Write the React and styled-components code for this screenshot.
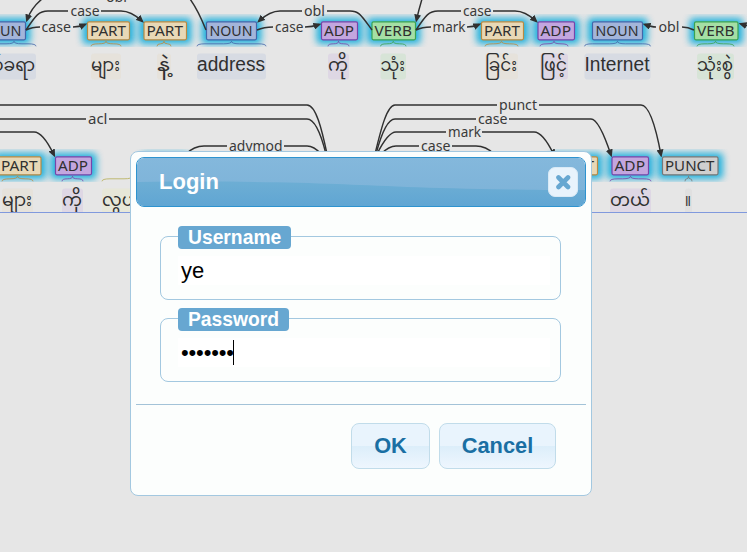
import React from "react";
import styled, { createGlobalStyle } from "styled-components";

const GlobalStyle = createGlobalStyle`
  * { box-sizing: border-box; }
  body { margin: 0; background: #e6e6e6; overflow: hidden; }
`;

const Page = styled.main`
  position: relative;
  width: 747px;
  height: 552px;
  overflow: hidden;
  background: #e6e6e6;
  font-family: "Liberation Sans", Arial, sans-serif;
`;

const TreePanel = styled.section`
  height: 213px;
  overflow: hidden;
  border-bottom: 1px solid #8099dd;
`;

const Tree = styled.svg`
  display: block;
`;

const TagText = styled.text`
  font: 15px "Noto Sans", "Open Sans", sans-serif;
  fill: #303030;
`;

const ArcText = styled.text`
  font: 14.2px "Noto Sans", "Open Sans", sans-serif;
  fill: #3a3a3a;
`;

const WordText = styled.text`
  font: ${(p) => (p.$latin ? "20px" : "18px")} "Liberation Sans", "Noto Sans Myanmar", Padauk, sans-serif;
  fill: #303030;
`;

const Dialog = styled.section`
  position: absolute;
  left: 130px;
  top: 151px;
  width: 462px;
  height: 345px;
  padding: 5px;
  display: flex;
  flex-direction: column;
  border: 1px solid #a3c8e0;
  border-radius: 8px;
  background: #fcfefd;
`;

const TitleBar = styled.header`
  position: relative;
  flex: none;
  height: 50px;
  padding: 0 7px 0 22px;
  display: flex;
  align-items: center;
  justify-content: space-between;
  border: 1px solid #2e93cf;
  border-radius: 8px;
  overflow: hidden;
  color: #fff;
`;

const Wave = styled.svg`
  position: absolute;
  inset: 0;
`;

const Title = styled.h1`
  position: relative;
  margin: 0;
  font-size: 22px;
  line-height: 26px;
`;

const CloseButton = styled.button`
  position: relative;
  width: 30px;
  height: 30px;
  padding: 0;
  display: grid;
  place-items: center;
  border: 1px solid #d9eaf6;
  border-radius: 7px;
  background: #e8f3fc;
`;

const Form = styled.div`
  flex: 1;
  display: flex;
  flex-direction: column;
  padding-top: 19px;
`;

const Field = styled.div`
  height: 74px;
  margin: 0 25px 8px 24px;
  display: flex;
  flex-direction: column;
  align-items: flex-start;
`;

const Frame = styled.div`
  align-self: stretch;
  height: 64px;
  margin-top: -13px;
  padding: 19px 10px 0 17px;
  border: 1px solid #a3c8e0;
  border-radius: 8px;
`;

const Legend = styled.label`
  position: relative;
  z-index: 1;
  height: 23px;
  margin-left: 18px;
  padding: 0 10px;
  border-radius: 4px;
  background: #67a7d1;
  color: #fff;
  font-weight: bold;
  font-size: 19.3px;
  line-height: 23px;
`;

const Input = styled.div`
  height: 29px;
  padding-left: 3px;
  display: flex;
  align-items: center;
  background: #fff;
  color: #000;
  font-size: 22px;
  line-height: 29px;
`;

const Dots = styled.span`
  width: 52px;
  white-space: nowrap;
  letter-spacing: -0.15px;
`;

const Caret = styled.span`
  width: 1px;
  height: 25px;
  background: #000;
`;

const Footer = styled.footer`
  margin-top: auto;
  height: 86px;
  padding: 18px 30px 0 0;
  display: flex;
  justify-content: flex-end;
  gap: 9px;
  border-top: 1px solid #a3c3d8;
`;

const Button = styled.button`
  width: ${(p) => p.$width}px;
  height: 46px;
  padding: 0;
  border: 1px solid #c1dcea;
  border-radius: 8px;
  background: linear-gradient(#e9f4fd 0 49%, #dceefa 50%, #eef6fe 100%);
  color: #1a6fa3;
  font: bold 21.8px "Liberation Sans", Arial, sans-serif;
`;

const COLORS = {
  NOUN: ["#a3b5da", "#4366aa"],
  PART: ["#e8d8b6", "#b98a42"],
  ADP: ["#c3a6df", "#7745a9"],
  VERB: ["#a5dfa5", "#3ba352"],
  PUNCT: ["#cfcfcf", "#777777"],
  OTHER: ["#eeeeaa", "#b5ae55"],
};

// [type, tag left, tag right, word, word left, word right]
const ROWS = [
  {
    top: 21,
    items: [
      ["NOUN", -25, 25.5, "စ်ခရာ", -8, 36],
      ["PART", 87.5, 129.5, "များ", 91, 121],
      ["PART", 144, 186.5, "နဲ့", 157, 171],
      ["NOUN", 206.5, 256.5, "address", 197, 266],
      ["ADP", 321.5, 357.5, "ကို", 328, 349],
      ["VERB", 372, 415.5, "သုံး", 380.5, 406],
      ["PART", 481.5, 523.5, "ခြင်း", 485, 518],
      ["ADP", 538, 574.5, "ဖြင့်", 540, 568],
      ["NOUN", 592.5, 642.5, "Internet", 584.5, 650.5],
      ["VERB", 694.5, 738, "သုံးစွဲ", 697, 734],
    ],
  },
  {
    top: 156,
    items: [
      ["PART", -1.5, 41, "များ", 2, 33],
      ["ADP", 55.5, 91.5, "ကို", 62, 83],
      ["OTHER", 146, 184, "လွယ်ကူ", 102, 162],
      ["PART", 555, 597.5, "", 555, 590],
      ["ADP", 612, 648.5, "တယ်", 610, 651],
      ["PUNCT", 662.5, 718, "။", 685, 692],
    ],
  },
];

const ARCS = [
  ["M42 -1Q31 8 27 20", true],
  ["M190 -1Q198 10 206 30"],
  ["M26 30C36 15 39 11 48 11H68"],
  ["M101 11H121Q131 11 142 21", true],
  ["M26 30Q32 27 40 27"],
  ["M73 27Q79 27 85 24.5", true],
  ["M372 30C361 15 359 11 350 11H327"],
  ["M302 11H280Q270 11 259 21", true],
  ["M257 30Q264 27 273 27"],
  ["M305 27Q312 27 319 24.5", true],
  ["M422 -1Q419 9 416.5 20", true],
  ["M416 30C426 15 429 11 438 11H461"],
  ["M493 11H515Q525 11 536 21", true],
  ["M416 30Q422 27 431 27"],
  ["M467 27Q473 27 479 24.5", true],
  ["M694 30Q688 27 682 27"],
  ["M656 27Q652 27 645 24.5", true],
  ["M748 26L741 24", true],
  ["M-1 105H307C316 105 322 130 327 154"],
  ["M-1 119H86"],
  ["M109 119H307C315 119 321 134 326 154"],
  ["M-1 132H34Q43 132 54 155", true],
  ["M186 154Q194 146 204 146H227"],
  ["M284 146H307Q314 146 321 154"],
  ["M375 154C381 129 387 105 395 105H497"],
  ["M539 105H641C649 105 656 128 661 155", true],
  ["M376 154C381 135 387 119 395 119H476"],
  ["M509 119H591Q599 119 611 155", true],
  ["M377 154Q388 132 396 132H446"],
  ["M482 132H534Q543 132 554 155", true],
  ["M381 154Q389 146 396 146H419"],
  ["M452 146H476Q486 146 494 154"],
];

// [label, left, width, baseline]
const LABELS = [
  ["obl", 106, 21, 1.5],
  ["case", 70.5, 29, 16],
  ["case", 41.5, 29.5, 32],
  ["obl", 304, 21, 16],
  ["case", 275, 28.5, 32],
  ["case", 463, 28.5, 16],
  ["mark", 432.5, 33, 32],
  ["obl", 658.5, 21, 32],
  ["acl", 88, 19.5, 124],
  ["advmod", 229, 53.5, 151],
  ["punct", 499, 38, 110],
  ["case", 478, 29.5, 124],
  ["mark", 448, 33, 137],
  ["case", 421, 29.5, 151],
];

function Brace({ x1, x2, y, color }) {
  const m = (x1 + x2) / 2;
  const d = Math.min(8, (x2 - x1) / 4);
  return (
    <path
      d={`M${x1} ${y + 5}Q${x1} ${y + 2.5} ${x1 + d} ${y + 2.5}H${m - d}Q${m} ${y + 2.5} ${m} ${y}Q${m} ${y + 2.5} ${m + d} ${y + 2.5}H${x2 - d}Q${x2} ${y + 2.5} ${x2} ${y + 5}`}
      fill="none"
      stroke={color}
      strokeOpacity="0.8"
    />
  );
}

function Token({ item, top }) {
  const [type, x1, x2, word, w1, w2] = item;
  const [fill, stroke] = COLORS[type];
  const latin = /^[a-z]/i.test(word);
  const textWidth = x2 - x1 - (type === "NOUN" ? 7 : 6);
  return (
    <g>
      <rect x={w1} y={top + 32.5} width={w2 - w1} height="26" rx="3" fill={fill} opacity="0.22" />
      <rect x={x1} y={top + 0.8} width={x2 - x1} height="18" rx="1.5" fill={fill} stroke={stroke} strokeWidth="1.2" />
      <TagText x={(x1 + x2 - textWidth) / 2 - 0.5} y={top + 15} textLength={textWidth} lengthAdjust="spacingAndGlyphs">
        {type === "OTHER" ? "" : type}
      </TagText>
      <Brace x1={w1} x2={w2} y={top + 20.3} color={stroke} />
      {word && (
        <WordText $latin={latin} x={w1} y={top + (latin ? 50 : 49.5)} textLength={w2 - w1 - 1} lengthAdjust="spacingAndGlyphs">
          {word}
        </WordText>
      )}
    </g>
  );
}

function DependencyTree() {
  return (
    <Tree width="747" height="212" viewBox="0 0 747 212">
      <defs>
        <filter id="glow" x="-40%" y="-60%" width="180%" height="220%">
          <feGaussianBlur stdDeviation="3.8" />
        </filter>
        <clipPath id="glowBands">
          <path d="M0 14H747V47H0ZM0 149H747V182H0Z" />
        </clipPath>
        <marker id="arrow" viewBox="0 0 8 7" refX="5.5" refY="3.5" markerWidth="8" markerHeight="7" markerUnits="userSpaceOnUse" orient="auto">
          <path d="M0 0L8 3.5L0 7Z" fill="#303030" />
        </marker>
      </defs>
      <g clipPath="url(#glowBands)">
        {ROWS.map((row) =>
          row.items.map(([, x1, x2], i) => (
            <rect key={`${row.top}-${i}`} x={x1 - 5} y={row.top - 3} width={x2 - x1 + 10} height="26" rx="4" fill="#00a9dc" opacity="0.85" filter="url(#glow)" />
          ))
        )}
      </g>
      {ROWS.map((row) => row.items.map((item, i) => <Token key={`${row.top}-${i}`} item={item} top={row.top} />))}
      {ARCS.map(([d, arrow]) => (
        <path key={d} d={d} fill="none" stroke="#303030" strokeWidth="1.45" markerEnd={arrow ? "url(#arrow)" : undefined} />
      ))}
      {LABELS.map(([label, x, width, y]) => (
        <ArcText key={`${x}-${y}`} x={x} y={y} textLength={width} lengthAdjust="spacingAndGlyphs">
          {label}
        </ArcText>
      ))}
    </Tree>
  );
}

export default function App() {
  return (
    <Page>
      <GlobalStyle />
      <TreePanel>
        <DependencyTree />
      </TreePanel>
      <Dialog role="dialog" aria-label="Login">
        <TitleBar>
          <Wave width="450" height="50" viewBox="0 0 450 50" preserveAspectRatio="none">
            <defs>
              <linearGradient id="bar" x2="0" y2="1">
                <stop offset="0" stopColor="#84b8dc" />
                <stop offset="1" stopColor="#7bb1d7" />
              </linearGradient>
              <linearGradient id="wave" x2="0" y2="1">
                <stop offset="0" stopColor="#6daed4" />
                <stop offset="1" stopColor="#5fa5d3" />
              </linearGradient>
            </defs>
            <path d="M0 0H450V50H0Z" fill="url(#bar)" />
            <path d="M0 24C80 23 150 24 200 26S320 32 450 32V50H0Z" fill="url(#wave)" />
          </Wave>
          <Title>Login</Title>
          <CloseButton aria-label="Close">
            <svg width="16" height="16" viewBox="0 0 16 16">
              <path d="M3.5 3.5L13 13M13 3.5L3.5 13" stroke="#67a7d1" strokeWidth="4.6" strokeLinecap="round" />
            </svg>
          </CloseButton>
        </TitleBar>
        <Form>
          <Field>
            <Legend>Username</Legend>
            <Frame>
              <Input>ye</Input>
            </Frame>
          </Field>
          <Field>
            <Legend>Password</Legend>
            <Frame>
              <Input>
                <Dots>•••••••</Dots>
                <Caret />
              </Input>
            </Frame>
          </Field>
          <Footer>
            <Button $width={79}>OK</Button>
            <Button $width={117}>Cancel</Button>
          </Footer>
        </Form>
      </Dialog>
    </Page>
  );
}
